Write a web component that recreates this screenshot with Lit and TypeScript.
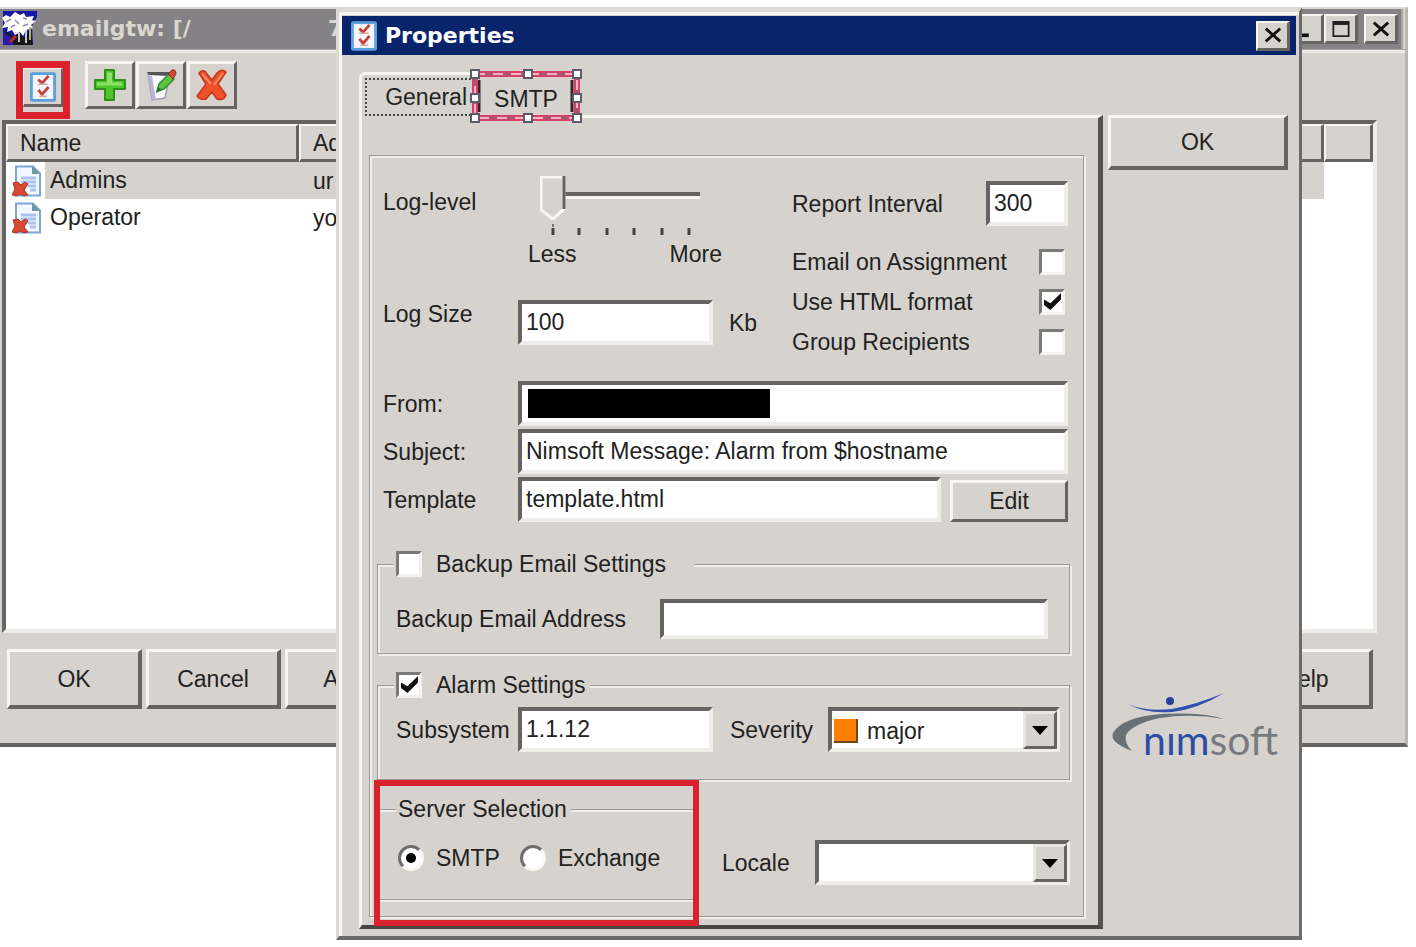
import { LitElement, html, css, svg } from "lit";
import { customElement } from "lit/decorators.js";

const checklist = html`<svg class="ico-check" viewBox="0 0 28 32" aria-hidden="true">
  <rect x="1.5" y="1.5" width="25" height="29" rx="1" fill="#e4f1fb" stroke="#5f9fdc" stroke-width="3" />
  <rect x="4" y="4" width="20" height="24" fill="#f4f6fa" />
  <path d="M9 8l4 4 7-8M9 19l4 5 7-8" fill="none" stroke="#c8403c" stroke-width="3" />
  <path d="M9 13h10M10 26h8" stroke="#d9a59f" stroke-width="1.5" />
</svg>`;

const plus = html`<svg class="ico-tool" viewBox="0 0 34 34" aria-hidden="true">
  <path d="M12 2h9v10h11v9H21v11h-9V21H2v-9h10z" fill="#4fc72c" stroke="#2f8f1d" stroke-width="2" stroke-linejoin="round" />
  <path d="M14 4.500h5v10h10v3H4v-3h10z" fill="#8be467" />
</svg>`;

const edit = html`<svg class="ico-tool" viewBox="0 0 34 34" aria-hidden="true">
  <path d="M4 5L26 6 21 30 8 32z" fill="#fafaff" stroke="#9aa0b4" stroke-width="1.500" />
  <path d="M3 4h22v4L5 7z" fill="#555" />
  <path d="M4 7l4 24 4 1L8 8z" fill="#b9b4d8" />
  <path d="M13 23l2-7L25 6l5 5-10 10z" fill="#5cc63c" stroke="#2f8f2a" stroke-width="1.500" />
  <path d="M24 6l4-4q4-1 4 4l-3 5z" fill="#cf4a35" stroke="#8d2f22" />
  <path d="M12 25l2-6 4 3z" fill="#2f6e2a" />
</svg>`;

const cross = html`<svg class="ico-tool" viewBox="0 0 34 34" aria-hidden="true">
  <path d="M4 5q5-5 8 1l5 6 5-7q5-5 9-1l-8 12 8 11q-2 6-9 4l-5-7-6 7q-7 1-9-3l9-12z" fill="#f0502a" stroke="#c5361a" stroke-width="1.500" />
  <path d="M7 6l9 10M28 5l-9 12" stroke="#ff8a66" stroke-width="2" />
</svg>`;

const profile = html`<svg class="ico-row" viewBox="0 0 30 32" aria-hidden="true">
  <path d="M4 1.500h17l7 7v22H4z" fill="#f1f8ff" stroke="#7da6d8" stroke-width="2" />
  <path d="M20 1v8h8z" fill="#6f9a9c" />
  <path d="M9 13h15M9 17h15M16 21h8M18 25h6" stroke="#a9c4ee" stroke-width="3" />
  <path d="M1 18l5-1 3 3 4-3 3 2-4 6 4 5-4 1-4-2-4 2-4-1 3-6z" fill="#d94a30" stroke="#a8382a" />
</svg>`;

const appIcon = html`<svg class="ico-app" viewBox="0 0 36 36" aria-hidden="true">
  <path d="M1 0h34v6l-5 9 1 19H19l-2-7-4 7H1z" fill="#1717a5" />
  <path d="M2 34l2-14 8 6 6-5 4 6 5-6 3 7 1 6z" fill="#171717" />
  <path d="M0 7l4-3 4 2 5-5 5 3 4-2 2 4 8-1-2 4 4 1-5 4 2 3-7 2-3 6-3-4-5 3-3-5-5 2 1-5-6 1 3-5z" fill="#fff" />
  <path d="M4 11l5-3M13 9l4 4M21 7l4 1M9 16l4-2M26 13l-5 2" stroke="#98a" stroke-width="1.500" />
  <path d="M1 22l8 4 3 8H1z" fill="#2c1ba8" />
  <path d="M8 31l6-6" stroke="#c3262b" stroke-width="3" />
  <path d="M17 22v9M24 19v13" stroke="#fff" stroke-width="1.500" />
  <path d="M28 16v13" stroke="#b9b53c" stroke-width="2" />
</svg>`;

const closeGlyph = html`<svg class="glyph" viewBox="0 0 20 16" aria-hidden="true">
  <path d="M2 1l16 14M18 1L2 15" stroke="#111" stroke-width="3.200" />
</svg>`;

const maxGlyph = html`<svg class="glyph" viewBox="0 0 20 18" aria-hidden="true">
  <path d="M1.500 1h17v16h-17z" fill="none" stroke="#222" stroke-width="2" />
  <path d="M1 2.500h18" stroke="#222" stroke-width="4" />
</svg>`;

const minGlyph = html`<svg class="glyph" viewBox="0 0 20 18" aria-hidden="true">
  <path d="M0 16h12" stroke="#111" stroke-width="4" />
</svg>`;

const handles = [0, 53, 102].flatMap((x) => [0, 24, 44].map((y) => ({ x, y }))).filter((p) => !(p.x === 53 && p.y === 24));

const selection = html`<svg class="selection" viewBox="-6 -6 114 56" aria-hidden="true">
  <path d="M4 6v32M97 6v32" stroke="#3a2226" stroke-width="3" />
  <rect width="102" height="44" fill="none" stroke="#d8406a" stroke-width="6" />
  <rect width="102" height="44" fill="none" stroke="#9a5a78" stroke-width="2" />
  <rect width="102" height="44" fill="none" stroke="#f3b6c6" stroke-width="2" stroke-dasharray="10 8" />
  ${handles.map((p) => svg`<rect x=${p.x - 4} y=${p.y - 4} width="8" height="8" fill="#fff" stroke="#5a5c66" stroke-width="2" />`)}
</svg>`;

const logo = html`<svg class="logo" viewBox="0 0 170 70" role="img" aria-label="nimsoft">
  <circle cx="58" cy="9" r="4" fill="#27409a" />
  <path d="M16 12Q34 20 60 17Q86 12 112 1Q86 17 60 20Q34 22 16 12Z" fill="#2f4fb0" />
  <path d="M112 27Q80 21 48 26Q20 32 14 43Q12 51 20 59Q-3 50 1 41Q10 25 50 22Q90 20 112 27Z" fill="#697176" />
  <text x="31" y="63" class="logo-text"><tspan fill="#2c4da3">nım</tspan><tspan fill="#777b80">soft</tspan></text>
</svg>`;

const ticks = html`<svg class="ticks" viewBox="0 0 160 12" aria-hidden="true">
  <path d="M13 0v3" stroke="#777" stroke-width="2" />
  ${[13, 39, 67, 94, 122, 149].map((x) => svg`<path d="M${x} 4v7" stroke="#444" stroke-width="3" />`)}
</svg>`;

@customElement("app-root")
export class AppRoot extends LitElement {
  static styles = css`
    :host {
      display: block;
      position: relative;
      min-height: 947px;
      overflow: hidden;
      box-sizing: border-box;
      padding: 7px 8px 0 0;
      background: #fff;
      color: #222;
      font: 23px/28px "Liberation Sans", Arial, sans-serif;
      --face: #d6d3ce;
      --light: #f6f5f1;
      --dark: #666462;
      --mid: #9c9a96;
    }
    * { box-sizing: border-box; }
    button, input, select { font: inherit; color: inherit; margin: 0; border-radius: 0; }
    svg { display: block; }
    button {
      display: flex;
      align-items: center;
      justify-content: center;
      padding: 0;
      background: var(--face);
      border: 3px solid;
      border-color: var(--light) var(--dark) var(--dark) var(--light);
    }
    .main {
      background: var(--face);
      border: solid;
      border-width: 2px 3px 4px 0;
      border-color: #dddad5 #b9b7b4 var(--dark);
    }
    .caption {
      display: flex;
      align-items: center;
      font: bold 22px/28px "DejaVu Sans", sans-serif;
    }
    .caption h1 { flex: 1; margin: 0; font: inherit; white-space: pre; overflow: hidden; }
    .main .caption {
      height: 40px;
      margin-right: 2px;
      padding: 0 3px 0 2px;
      background: #848284;
      color: #d9d7d2;
      border-right: 2px solid #a5a3a1;
    }
    .rest { margin-left: 137px; }
    .ico-app { width: 36px; height: 36px; margin-right: 4px; }
    .cap-btn { width: 34px; height: 30px; border-width: 2px 3px 3px 2px; }
    .cap-gap { margin-left: 6px; }
    .glyph { width: 18px; height: 18px; }
    .tools {
      display: flex;
      gap: 1px;
      padding: 11px 0 1px 16px;
      border-top: 1px solid #a9a7a4;
      box-shadow: inset 0 3px 0 #eceae6;
    }
    .tool { width: 50px; height: 48px; }
    .ico-tool { width: 34px; height: 34px; }
    .marked {
      width: 54px;
      height: 58px;
      margin-right: 14px;
      padding-bottom: 5px;
      border: 7px solid #dc202c;
      background: var(--face);
    }
    .marked .tool { width: 40px; height: 39px; border-width: 1px 2px 3px 1px; }
    .marked .ico-check { width: 26px; height: 30px; }
    .list {
      height: 513px;
      margin: 0 28px 0 2px;
      background: #fff;
      border: 4px solid;
      border-color: var(--dark) #efede9 #efede9 var(--dark);
      overflow: hidden;
    }
    table { width: 100%; border-collapse: separate; border-spacing: 0; table-layout: fixed; }
    th {
      height: 38px;
      padding: 0 12px;
      text-align: left;
      font-weight: normal;
      background: var(--face);
      border: 3px solid;
      border-width: 2px 3px 3px 2px;
      border-color: var(--light) var(--dark) var(--dark) var(--light);
    }
    td { height: 37px; padding: 0 14px; }
    .c-name { width: 293px; }
    .c-end { width: 49px; }
    td.who { padding: 0 0 0 6px; }
    .who span { display: flex; align-items: center; gap: 3px; height: 37px; }
    .who b { flex: 1; font-weight: normal; line-height: 37px; padding-left: 5px; }
    .ico-row { width: 30px; height: 32px; }
    .picked b, .picked td:nth-child(2) { background: var(--face); }
    .actions { display: flex; gap: 4px; padding: 16px 32px 34px 7px; }
    .action { width: 135px; height: 60px; border-width: 3px 4px 4px 3px; }
    .push { margin-left: auto; }

    .dialog {
      position: absolute;
      top: 7px;
      left: 336px;
      right: 114px;
      padding: 4px 3px 7px;
      background: var(--face);
      border: solid;
      border-width: 5px 3px 4px 3px;
      border-color: #dddad4 #6d6b6a #6d6b6a #dddad4;
      box-shadow: inset 3px 3px 0 #f8f7f4;
    }
    .dialog .caption { height: 39px; padding: 0 6px 0 9px; background: #08246b; color: #fff; }
    .dialog .caption .ico-check { width: 26px; height: 30px; margin-right: 8px; }
    .body { display: flex; gap: 5px; padding: 17px 8px 0 17px; }
    .book { flex: 1; min-width: 0; }
    .side { display: flex; flex-direction: column; width: 180px; padding: 43px 0 167px; }
    .side button { height: 55px; border-width: 3px 4px 4px 3px; }
    .logo { width: 170px; height: 70px; margin: auto 0 0 4px; overflow: visible; }
    .logo-text { font: 41px Lato, sans-serif; }
    .tabs { display: flex; height: 46px; }
    .tab { border: 0; height: 46px; background: none; }
    .tab-general {
      width: 116px;
      padding: 3px 0 2px 3px;
      border: solid var(--light);
      border-width: 3px 0 0 3px;
      border-top-left-radius: 6px;
    }
    .focus { display: flex; align-items: center; justify-content: flex-end; width: 110px; height: 38px; padding-right: 6px; border: 2px dotted #444; }
    .tab-smtp { position: relative; width: 102px; margin-top: 2px; height: 44px; padding-top: 6px; }
    .selection { position: absolute; left: -6px; top: -6px; width: 114px; height: 56px; }
    .tab-rest { flex: 1; align-self: flex-end; height: 3px; border-top: 3px solid var(--light); border-right: 5px solid #555351; }
    .page {
      padding: 37px 14px 8px 7px;
      border: solid;
      border-width: 0 5px 4px 3px;
      border-color: var(--light) #555351 #484644 var(--light);
    }
    .group, fieldset {
      min-width: 0;
      margin: 0;
      border: 1px solid var(--mid);
      box-shadow: inset 2px 2px 0 #efeeea, 2px 2px 0 #efeeea;
    }
    .group { padding: 0 13px 16px 7px; }
    .top { display: flex; justify-content: space-between; gap: 20px; padding: 20px 2px 19px 6px; }
    .left { display: grid; grid-template-columns: 135px auto; row-gap: 32px; align-content: start; align-items: start; }
    .lbl-slider { margin-top: 12px; }
    .slider { width: 194px; margin-left: 10px; }
    .slider input {
      display: block;
      width: 160px;
      height: 44px;
      margin-left: 12px;
      appearance: none;
      background: none;
    }
    .slider input::-webkit-slider-runnable-track {
      height: 44px;
      background: linear-gradient(transparent 16px, #666462 16px, #666462 20px, #f8f7f4 20px, #f8f7f4 23px, transparent 23px);
    }
    .slider input::-webkit-slider-thumb {
      appearance: none;
      width: 26px;
      height: 44px;
      background: url("data:image/svg+xml,%3Csvg xmlns='http://www.w3.org/2000/svg' viewBox='0 0 26 44'%3E%3Cpath d='M1 1h23v32L13 43 1 34z' fill='%23d6d3ce' stroke='%23f8f7f4' stroke-width='3'/%3E%3Cpath d='M24 0v33' stroke='%23666462' stroke-width='3'/%3E%3C/svg%3E");
    }
    .ticks { width: 160px; height: 12px; margin: 4px 0 4px 12px; }
    .ends { display: flex; justify-content: space-between; }
    .size { display: flex; align-items: center; gap: 16px; }
    .right { display: flex; flex-direction: column; width: 276px; padding-top: 5px; }
    .report { display: flex; align-items: center; justify-content: space-between; margin-bottom: 16px; }
    .tick-row { display: flex; align-items: center; justify-content: space-between; height: 40px; padding-right: 3px; }
    .text {
      height: 45px;
      min-width: 0;
      padding: 0 4px;
      background: #fff;
      border: 4px solid;
      border-color: var(--dark) #efeeea #efeeea var(--dark);
      outline: 0;
    }
    .w-short { width: 82px; }
    .w-mid { width: 195px; }
    .rows { display: grid; gap: 3px; padding: 0 2px 0 6px; margin-bottom: 28px; }
    .row { display: grid; grid-template-columns: 135px 1fr; align-items: center; }
    .row .text { width: 100%; }
    .from { position: relative; display: grid; }
    .redacted { position: absolute; left: 10px; top: 8px; width: 242px; height: 29px; background: #000; }
    .pair { display: flex; align-items: flex-end; gap: 9px; }
    .pair button { flex: none; width: 118px; height: 42px; }
    .box {
      appearance: none;
      position: relative;
      flex: none;
      width: 26px;
      height: 26px;
      background: #fff;
      border: 3px solid;
      border-color: #7b7977 #f3f2ee #f3f2ee #7b7977;
    }
    .box:checked::before {
      content: "";
      position: absolute;
      inset: 1px 1px 2px 2px;
      background: #111;
      clip-path: polygon(0 38%, 0 70%, 38% 100%, 100% 38%, 100% 0, 38% 60%);
    }
    fieldset { padding: 0; }
    legend { display: flex; align-items: center; height: 28px; padding: 0 4px 0 2px; margin-left: 16px; background: var(--face); }
    legend label { margin-left: 14px; }
    .backup { margin-bottom: 17px; }
    .backup legend { padding-right: 28px; }
    .backup .inner { display: flex; align-items: center; padding: 21px 21px 14px 18px; }
    .backup .inner label { width: 264px; }
    .backup .text { flex: 1; height: 40px; }
    .alarm .inner { display: flex; align-items: center; padding: 8px 9px 27px 18px; }
    .alarm .inner label { width: 122px; }
    .alarm .inner .sev { width: 98px; margin-left: 17px; }
    .combo { position: relative; flex: 1; display: grid; min-width: 0; }
    .combo select { width: 100%; height: 45px; padding: 2px 40px 0 4px; appearance: none; background: #fff; border: 4px solid; border-color: var(--dark) #efeeea #efeeea var(--dark); outline: 0; opacity: 1; }
    .combo .with-swatch { padding-left: 35px; }
    .swatch { position: absolute; left: 6px; top: 12px; width: 24px; height: 24px; background: #ff8000; border: solid #6b4420; border-width: 0 2px 2px 0; pointer-events: none; }
    .arrow {
      position: absolute;
      right: 3px;
      top: 4px;
      bottom: 3px;
      width: 34px;
      display: grid;
      place-items: center;
      background: var(--face);
      border: 3px solid;
      border-color: #e8e6e2 var(--dark) var(--dark) #e8e6e2;
      pointer-events: none;
    }
    .arrow::before { content: ""; border: 8px solid transparent; border-top: 9px solid #000; border-bottom: 0; }
    .bottom { display: flex; align-items: flex-start; }
    .server-wrap { position: relative; width: 319px; padding-top: 15px; }
    .server { height: 105px; border-left-color: transparent; border-right-color: transparent; }
    .server legend { margin-left: 18px; }
    .radios { display: flex; align-items: center; height: 70px; padding-left: 20px; }
    .radios label { margin: 0 20px 0 12px; }
    .dot {
      appearance: none;
      display: grid;
      place-items: center;
      width: 26px;
      height: 26px;
      border: 3px solid;
      border-color: #6f6d6b #f8f7f4 #f8f7f4 #6f6d6b;
      background: #fff;
    }
    .radios .dot { border-radius: 50%; }
    .dot:checked::before { content: ""; width: 10px; height: 10px; border-radius: 50%; background: #000; }
    .highlight { position: absolute; inset: 0 -3px -26px -3px; border: 6px solid #d9222e; pointer-events: none; }
    .locale { flex: 1; display: flex; align-items: center; padding: 60px 0 0 26px; }
    .locale label { width: 93px; }
  `;

  render() {
    return html`
      <section class="main" aria-label="emailgtw">
        <header class="caption">
          ${appIcon}
          <h1>emailgtw: [/<span class="rest">7</span></h1>
          <button class="cap-btn" aria-label="Minimize">${minGlyph}</button>
          <button class="cap-btn" aria-label="Maximize">${maxGlyph}</button>
          <button class="cap-btn cap-gap" aria-label="Close">${closeGlyph}</button>
        </header>
        <nav class="tools" aria-label="Toolbar">
          <div class="marked"><button class="tool" aria-label="Properties">${checklist}</button></div>
          <button class="tool" aria-label="Add">${plus}</button>
          <button class="tool" aria-label="Edit profile">${edit}</button>
          <button class="tool" aria-label="Delete">${cross}</button>
        </nav>
        <div class="list">
          <table>
            <thead>
              <tr><th class="c-name">Name</th><th>Address</th><th class="c-end"></th></tr>
            </thead>
            <tbody>
              <tr class="picked"><td class="who"><span>${profile}<b>Admins</b></span></td><td>ur</td><td></td></tr>
              <tr><td class="who"><span>${profile}<b>Operator</b></span></td><td>yo</td><td></td></tr>
            </tbody>
          </table>
        </div>
        <footer class="actions">
          <button class="action">OK</button>
          <button class="action">Cancel</button>
          <button class="action">Apply</button>
          <button class="action push">Help</button>
        </footer>
      </section>

      <section class="dialog" role="dialog" aria-label="Properties">
        <header class="caption">
          ${checklist}
          <h1>Properties</h1>
          <button class="cap-btn" aria-label="Close dialog">${closeGlyph}</button>
        </header>
        <div class="body">
          <div class="book">
            <div class="tabs" role="tablist">
              <button class="tab tab-general" role="tab" aria-selected="true"><span class="focus">General</span></button>
              <button class="tab tab-smtp" role="tab" aria-selected="false">SMTP${selection}</button>
              <div class="tab-rest"></div>
            </div>
            <div class="page" role="tabpanel">
              <form class="group" @submit=${(e: Event) => e.preventDefault()}>${this.top()}${this.rows()}${this.sets()}</form>
            </div>
          </div>
          <aside class="side">
            <button>OK</button>
            ${logo}
          </aside>
        </div>
      </section>
    `;
  }

  private top() {
    return html`<div class="top">
      <div class="left">
        <label class="lbl-slider" for="level">Log-level</label>
        <div class="slider">
          <input id="level" type="range" min="0" max="5" value="0" />
          ${ticks}
          <div class="ends"><span>Less</span><span>More</span></div>
        </div>
        <label for="size">Log Size</label>
        <div class="size"><input id="size" class="text w-mid" type="text" value="100" /><span>Kb</span></div>
      </div>
      <div class="right">
        <div class="report">
          <label for="interval">Report Interval</label>
          <input id="interval" class="text w-short" type="text" value="300" />
        </div>
        <div class="tick-row"><label for="assign">Email on Assignment</label><input id="assign" class="box" type="checkbox" /></div>
        <div class="tick-row"><label for="html">Use HTML format</label><input id="html" class="box" type="checkbox" checked /></div>
        <div class="tick-row"><label for="grp">Group Recipients</label><input id="grp" class="box" type="checkbox" /></div>
      </div>
    </div>`;
  }

  private rows() {
    return html`<div class="rows">
      <div class="row">
        <label for="from">From:</label>
        <div class="from"><input id="from" class="text" type="text" /><span class="redacted"></span></div>
      </div>
      <div class="row">
        <label for="subject">Subject:</label>
        <input id="subject" class="text" type="text" value="Nimsoft Message: Alarm from $hostname" />
      </div>
      <div class="row">
        <label for="template">Template</label>
        <div class="pair"><input id="template" class="text" type="text" value="template.html" /><button type="button">Edit</button></div>
      </div>
    </div>`;
  }

  private sets() {
    return html`
      <fieldset class="backup">
        <legend><input id="backup" class="box" type="checkbox" /><label for="backup">Backup Email Settings</label></legend>
        <div class="inner">
          <label for="address">Backup Email Address</label>
          <input id="address" class="text" type="text" />
        </div>
      </fieldset>
      <fieldset class="alarm">
        <legend><input id="alarm" class="box" type="checkbox" checked /><label for="alarm">Alarm Settings</label></legend>
        <div class="inner">
          <label for="subsystem">Subsystem</label>
          <input id="subsystem" class="text w-mid" type="text" value="1.1.12" />
          <label class="sev" for="severity">Severity</label>
          <div class="combo">
            <select id="severity" class="with-swatch"><option>major</option></select>
            <span class="swatch"></span><span class="arrow"></span>
          </div>
        </div>
      </fieldset>
      <div class="bottom">
        <div class="server-wrap">
          <fieldset class="server">
            <legend>Server Selection</legend>
            <div class="radios">
              <input id="smtp" class="dot" type="radio" name="server" checked /><label for="smtp">SMTP</label>
              <input id="exchange" class="dot" type="radio" name="server" /><label for="exchange">Exchange</label>
            </div>
          </fieldset>
          <span class="highlight"></span>
        </div>
        <div class="locale">
          <label for="locale">Locale</label>
          <div class="combo"><select id="locale"><option></option></select><span class="arrow"></span></div>
        </div>
      </div>
    `;
  }
}
